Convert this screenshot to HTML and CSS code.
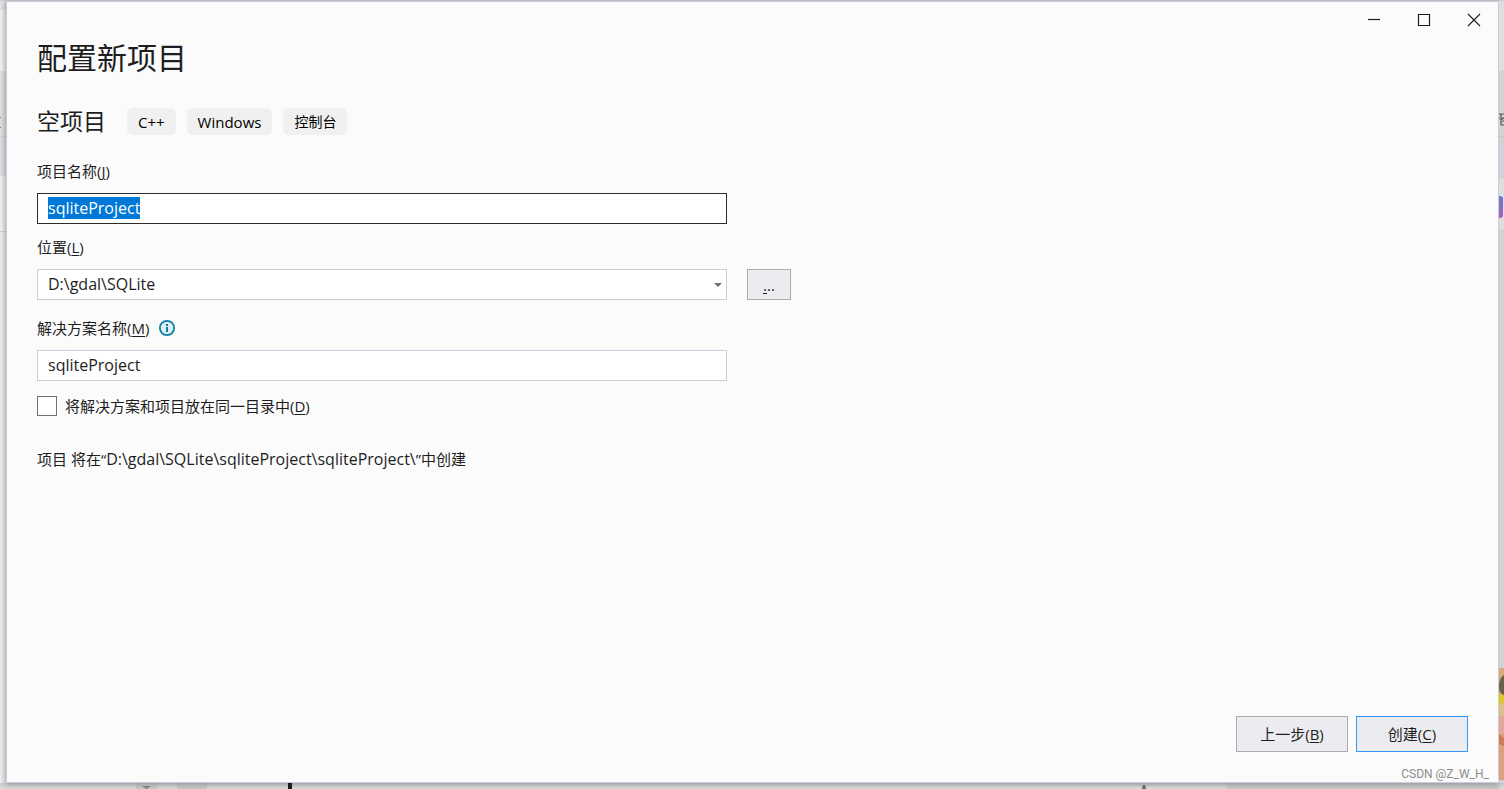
FILE: index.html
```html
<!DOCTYPE html>
<html lang="zh-CN">
<head>
    <meta charset="UTF-8">
    <meta name="viewport" content="width=device-width, initial-scale=1.0">
    <title>配置新项目</title>
    <link rel="stylesheet" href="styles.css">
</head>
<body>
    <div class="desktop">
        <div class="edge edge-left"></div>
        <main class="window">
            <div class="titlebar">
                <button class="caption-btn" aria-label="最小化">
                    <svg width="14" height="14" viewBox="0 0 14 14"><path d="M1 6.5h12" stroke="#1e1e1e" stroke-width="1.2"/></svg>
                </button>
                <button class="caption-btn" aria-label="最大化">
                    <svg width="14" height="14" viewBox="0 0 14 14"><path d="M1.5 1.5h11v11h-11z" fill="none" stroke="#1e1e1e" stroke-width="1.2"/></svg>
                </button>
                <button class="caption-btn" aria-label="关闭">
                    <svg width="14" height="14" viewBox="0 0 14 14"><path d="M1 1l12 12M13 1L1 13" stroke="#1e1e1e" stroke-width="1.1"/></svg>
                </button>
            </div>

            <form class="content">
                <h1>配置新项目</h1>
                <div class="template">
                    <h2>空项目</h2>
                    <span class="tag">C++</span>
                    <span class="tag">Windows</span>
                    <span class="tag tag-cjk">控制台</span>
                </div>

                <div class="field">
                    <label for="project-name">项目名称(<u>J</u>)</label>
                    <input class="text-box" type="text" id="project-name" value="sqliteProject" spellcheck="false">
                </div>

                <div class="field">
                    <label for="location">位置(<u>L</u>)</label>
                    <div class="location-row">
                        <div class="combo">
                            <select class="text-box" id="location">
                                <option>D:\gdal\SQLite</option>
                            </select>
                        </div>
                        <button type="button" class="btn browse-btn"><u>.</u>..</button>
                    </div>
                </div>

                <div class="field solution">
                    <div class="label-row">
                        <label for="solution-name">解决方案名称(<u>M</u>)</label>
                        <svg width="16" height="16" viewBox="0 0 16 16">
                            <circle cx="8" cy="8" r="7.1" fill="#e0eef2" stroke="#0a7ea4" stroke-width="1.8"/>
                            <path d="M7 4h2v2H7zM7 7h2v5H7z" fill="#0a7ea4"/>
                        </svg>
                    </div>
                    <input class="text-box" type="text" id="solution-name" value="sqliteProject" spellcheck="false">
                </div>

                <div class="check-row">
                    <input type="checkbox" id="same-dir">
                    <label for="same-dir">将解决方案和项目放在同一目录中(<u>D</u>)</label>
                </div>

                <p class="summary">项目 将在“<span class="path">D:\gdal\SQLite\sqliteProject\sqliteProject\</span>”中创建</p>
            </form>

            <div class="footer">
                <button class="btn">上一步(<u>B</u>)</button>
                <button class="btn btn-primary">创建(<u>C</u>)</button>
            </div>
            <div class="watermark">CSDN @Z_W_H_</div>
        </main>
        <div class="edge edge-right">
            <svg class="edge-glyph" width="5" height="14" viewBox="0 0 5 14">
                <path d="M0 2h5M2 2v3M0 6h5M1 8l4-2M2 9v4M2 9h3M2 13h3" fill="none" stroke="#55555c" stroke-width="1.2"/>
            </svg>
            <div class="edge-badge"></div>
            <svg class="avatar" width="5" height="112" viewBox="0 0 5 112">
                <path d="M0 0h5v112H0z" fill="#dca07c"/>
                <path d="M0 0h5v10H0z" fill="#d6ac7d"/>
                <path d="M5 7Q0 10 0 18t5 9z" fill="#6b6047"/>
                <path d="M0 25l5 3v6l-5 4z" fill="#dcc822"/>
                <path d="M0 38l5-4v14H0z" fill="#dcc08a"/>
                <path d="M0 48h5v18H0z" fill="#dfa898"/>
                <path d="M0 66l5 4v8l-5-2z" fill="#cf7a55"/>
            </svg>
        </div>
        <div class="taskbar">
            <svg width="100%" height="6">
                <path d="M136 0h21v6h-21z" fill="#c9c9c9"/>
                <path d="M142 3h9l-4 3h-1z" fill="#8a8a8a"/>
                <path d="M177 0h30v6h-30z" fill="#c5c7c9"/>
                <path d="M288 0h4v6h-4z" fill="#1e1e1e"/>
                <path d="M1143 2h2l1 4h-4z" fill="#666"/>
                <path d="M1227 0h272v6h-272z" fill="#c9c9cc"/>
            </svg>
        </div>
    </div>

    <script>
        // The project name is ready to be typed over
        const projectName = document.getElementById('project-name');
        projectName.focus();
        projectName.select();
    </script>
</body>
</html>
```
FILE: styles.css
```css
* {
    box-sizing: border-box;
}
body {
    margin: 0;
    font-family: "Open Sans", "Noto Sans CJK SC", sans-serif;
    font-size: 15px;
    line-height: 20px;
    color: #1e1e1e;
    background: #e4e4e4;
}
.desktop {
    display: grid;
    grid-template-columns: 6px 1fr 5px;
    grid-template-rows: 1fr 6px;
    min-height: 100vh;
    padding-top: 1px;
    background: #cfcfd2;
}
.window {
    position: relative;
    display: flex;
    flex-direction: column;
    background: #fbfbfc;
    border: 1px solid #ccccdc;
    box-shadow: 0 1px 6px rgba(0, 0, 0, 0.3);
}
.titlebar {
    display: flex;
    justify-content: flex-end;
    height: 36px;
    margin-right: -1px;
}
.caption-btn {
    display: flex;
    align-items: center;
    justify-content: center;
    width: 50px;
    height: 36px;
    padding: 0;
    border: none;
    background: none;
}
.content {
    flex: 1;
    padding: 0 30px;
}
h1 {
    margin: 0 0 30px;
    font-size: 30px;
    line-height: 40px;
    font-weight: normal;
}
.template {
    display: flex;
    align-items: center;
    gap: 11px;
    margin-bottom: 26px;
}
h2 {
    margin: 0 10px 0 0;
    font-size: 23px;
    line-height: 27px;
    font-weight: normal;
}
.tag {
    height: 27px;
    padding: 0 11px;
    border-radius: 6px;
    font-size: 15px;
    line-height: 28px;
    color: #000;
    background: #f0f0f0;
}
.tag-cjk {
    font-size: 14px;
}
.field {
    display: flex;
    flex-direction: column;
    gap: 12px;
    margin-bottom: 13px;
}
.solution {
    margin-top: 18px;
}
label {
    display: block;
}
u {
    text-underline-offset: 2px;
}
.text-box {
    width: 100%;
    max-width: 690px;
    height: 31px;
    padding: 0 10px 2px;
    border: 1px solid #ccccdc;
    border-radius: 0;
    outline: none;
    appearance: none;
    font: inherit;
    font-size: 16px;
    color: #1e1e1e;
    background: #fff;
}
.text-box:focus {
    border-color: #2d2d30;
}
.text-box::selection {
    color: #fff;
    background: #0078d7;
}
.location-row {
    display: flex;
    gap: 20px;
}
.combo {
    position: relative;
    width: 100%;
    max-width: 690px;
    height: 31px;
}
.combo::after {
    content: "";
    position: absolute;
    top: 14px;
    right: 5px;
    border: 4px solid transparent;
    border-top-color: #717171;
    border-bottom: none;
    pointer-events: none;
}
.label-row {
    display: flex;
    align-items: center;
    gap: 10px;
}
.check-row {
    display: flex;
    align-items: center;
    gap: 8px;
    margin: 15px 0 33px;
}
.check-row input {
    appearance: none;
    width: 20px;
    height: 20px;
    margin: 0;
    border: 1px solid #717171;
    background: #fff;
}
.summary {
    margin: 0;
}
.path {
    font-size: 16px;
}
.btn {
    width: 112px;
    height: 36px;
    padding: 0;
    border: 1px solid #acacac;
    font: inherit;
    color: #1e1e1e;
    background: #ececf0;
}
.btn-primary {
    border-color: #3399ff;
}
.browse-btn {
    width: 44px;
    height: 31px;
}
.footer {
    display: flex;
    justify-content: flex-end;
    gap: 8px;
    padding: 0 30px 30px;
}
.watermark {
    position: absolute;
    right: 9px;
    bottom: 0;
    font-family: Roboto, sans-serif;
    font-size: 12px;
    line-height: 16px;
    color: #8c8c8c;
}

/* what shows around the dialog */
.edge {
    position: relative;
    overflow: hidden;
}
.edge-left {
    background:
        linear-gradient(to right, transparent, rgba(0, 0, 0, 0.08)),
        linear-gradient(#e6e6e6 9px, #f2f2f2 9px 70px, #e2e2e2 70px 135px, #d6d6d6 135px 136px, #dfe2e5 136px 175px, #f2f2f2 175px 230px, #d6d6d6 230px 231px, #efefef 231px);
}
.edge-left::before,
.edge-left::after {
    content: "";
    position: absolute;
    top: 116px;
    left: 0;
    width: 1px;
    height: 1px;
    background: #3d8ec4;
}
.edge-left::after {
    top: 126px;
}
.edge-right {
    background: linear-gradient(#dedede 9px, #dfdfdf 9px 70px, #d2d2d2 70px 135px, #c8c8c8 135px 136px, #d0d3d6 136px 178px, #dedede 178px 228px, #d2d2d4 228px);
}
.edge-glyph {
    position: absolute;
    top: 111px;
    left: 0;
}
.edge-badge {
    position: absolute;
    top: 195px;
    left: 0;
    width: 4px;
    height: 22px;
    border-radius: 0 3px 3px 0;
    background: linear-gradient(#6a78cc, #a95fc4);
}
.avatar {
    position: absolute;
    bottom: 3px;
    left: 0;
}
.taskbar {
    grid-column: 1 / -1;
    overflow: hidden;
    background: linear-gradient(#c8c8cb, #dedede);
}
.taskbar svg {
    display: block;
}
```
